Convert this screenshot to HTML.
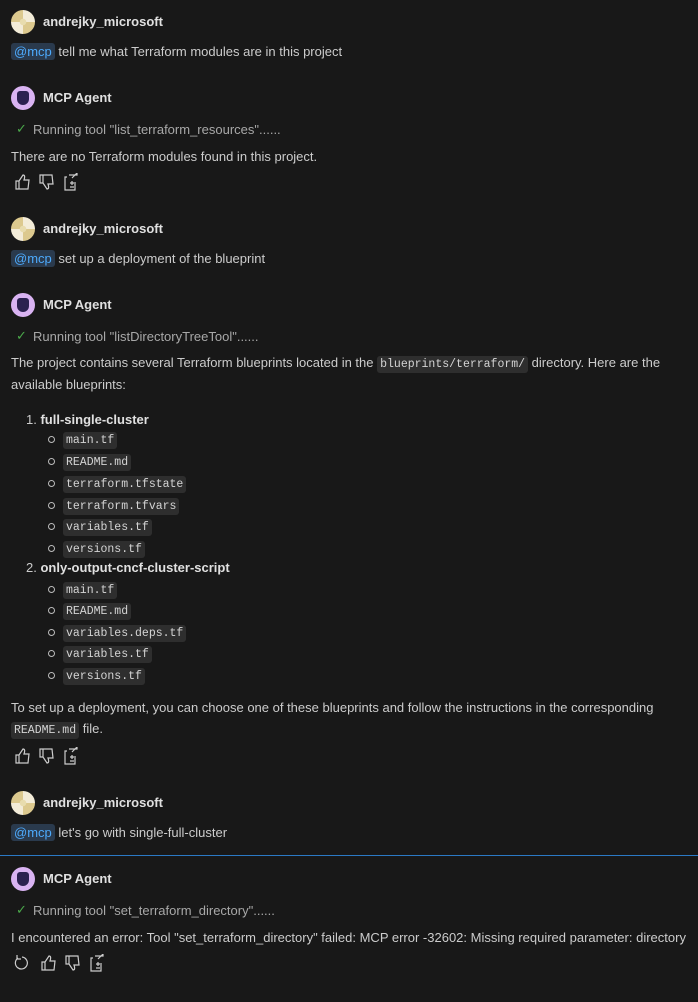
<!DOCTYPE html><html><head><style>
body{margin:0;width:698px;height:1002px;background:#181818;color:#cccccc;font-family:"Liberation Sans",sans-serif;font-size:13px;position:relative;overflow:hidden}
.a{position:absolute;line-height:18px;white-space:nowrap}
.n{font-weight:bold;color:#e0e0e0}
.av{position:absolute;left:11px;width:24px;height:24px;border-radius:50%}
.u{background:radial-gradient(circle,#e8dcae 0 3px,transparent 3.5px),conic-gradient(#f3ecd8 0 25%,#dcc98e 0 50%,#f3ecd8 0 75%,#dcc98e 0)}
.m{background:#d9b3f2}
.m:after{content:"";position:absolute;left:6px;top:5px;width:12px;height:14px;background:#2b2150;border-radius:3px 3px 6px 6px}
.at{background:#2a3a4d;color:#4daafc;padding:1px 3px;border-radius:3px}
.r{color:#a8a8a8;left:33px}
.ck{position:absolute;left:16px;color:#4aa84a;font-size:13px}
code{font-family:"Liberation Mono",monospace;font-size:11.5px;background:#2e2e2e;border-radius:3px;padding:2px 3px;color:#d4d4d4}
.b{position:absolute;left:48px;width:5px;height:5px;border:1px solid #bbb;border-radius:50%}
.ic{position:absolute}
</style></head><body>
<div class="av u" style="top:10px"></div><div class="a n" style="left:43px;top:13px">andrejky_microsoft</div>
<div class="a" style="left:11px;top:43px"><span class="at">@mcp</span> tell me what Terraform modules are in this project</div>
<div class="av m" style="top:86px"></div><div class="a n" style="left:43px;top:89px">MCP Agent</div>
<div class="ck" style="top:121px">✓</div><div class="a r" style="top:121px">Running tool "list_terraform_resources"......</div>
<div class="a" style="left:11px;top:148px">There are no Terraform modules found in this project.</div>
<svg class="ic" style="left:14px;top:173px" width="72" height="18" fill="none" stroke="#ccc" stroke-width="1.2"><path d="M2 8h3v8H2zM5 8l4-6c2 0 2 2 1 5h5l-1 9H5"/><path d="M26 10h3V2h-3zM29 10l4 6c2 0 2-2 1-5h5l-1-9h-9"/><path d="M53 4h-2v13h10V9M55 2h8v-2M63 0l-5 5M56 10h4M58 8v4M56 14h4"/></svg>
<div class="av u" style="top:217px"></div><div class="a n" style="left:43px;top:220px">andrejky_microsoft</div>
<div class="a" style="left:11px;top:250px"><span class="at">@mcp</span> set up a deployment of the blueprint</div>
<div class="av m" style="top:293px"></div><div class="a n" style="left:43px;top:296px">MCP Agent</div>
<div class="ck" style="top:328px">✓</div><div class="a r" style="top:328px">Running tool "listDirectoryTreeTool"......</div>
<div class="a" style="left:11px;top:354px">The project contains several Terraform blueprints located in the <code>blueprints/terraform/</code> directory. Here are the</div>
<div class="a" style="left:11px;top:376px">available blueprints:</div>
<div class="a" style="left:26px;top:411px">1. <b style="color:#e0e0e0">full-single-cluster</b></div>
<div class="b" style="top:436px"></div><div class="a" style="left:63px;top:430px"><code>main.tf</code></div>
<div class="b" style="top:458px"></div><div class="a" style="left:63px;top:452px"><code>README.md</code></div>
<div class="b" style="top:480px"></div><div class="a" style="left:63px;top:474px"><code>terraform.tfstate</code></div>
<div class="b" style="top:502px"></div><div class="a" style="left:63px;top:496px"><code>terraform.tfvars</code></div>
<div class="b" style="top:523px"></div><div class="a" style="left:63px;top:517px"><code>variables.tf</code></div>
<div class="b" style="top:545px"></div><div class="a" style="left:63px;top:539px"><code>versions.tf</code></div>
<div class="a" style="left:26px;top:559px">2. <b style="color:#e0e0e0">only-output-cncf-cluster-script</b></div>
<div class="b" style="top:586px"></div><div class="a" style="left:63px;top:580px"><code>main.tf</code></div>
<div class="b" style="top:607px"></div><div class="a" style="left:63px;top:601px"><code>README.md</code></div>
<div class="b" style="top:629px"></div><div class="a" style="left:63px;top:623px"><code>variables.deps.tf</code></div>
<div class="b" style="top:650px"></div><div class="a" style="left:63px;top:644px"><code>variables.tf</code></div>
<div class="b" style="top:672px"></div><div class="a" style="left:63px;top:666px"><code>versions.tf</code></div>
<div class="a" style="left:11px;top:699px">To set up a deployment, you can choose one of these blueprints and follow the instructions in the corresponding</div>
<div class="a" style="left:11px;top:720px"><code>README.md</code> file.</div>
<svg class="ic" style="left:14px;top:747px" width="72" height="18" fill="none" stroke="#ccc" stroke-width="1.2"><path d="M2 8h3v8H2zM5 8l4-6c2 0 2 2 1 5h5l-1 9H5"/><path d="M26 10h3V2h-3zM29 10l4 6c2 0 2-2 1-5h5l-1-9h-9"/><path d="M53 4h-2v13h10V9M55 2h8v-2M63 0l-5 5M56 10h4M58 8v4M56 14h4"/></svg>
<div class="av u" style="top:791px"></div><div class="a n" style="left:43px;top:794px">andrejky_microsoft</div>
<div class="a" style="left:11px;top:824px"><span class="at">@mcp</span> let's go with single-full-cluster</div>
<div style="position:absolute;left:0;top:855px;width:698px;height:1px;background:#2b79c5"></div>
<div class="av m" style="top:867px"></div><div class="a n" style="left:43px;top:870px">MCP Agent</div>
<div class="ck" style="top:902px">✓</div><div class="a r" style="top:902px">Running tool "set_terraform_directory"......</div>
<div class="a" style="left:11px;top:929px">I encountered an error: Tool "set_terraform_directory" failed: MCP error -32602: Missing required parameter: directory</div>
<svg class="ic" style="left:14px;top:954px" width="100" height="18" fill="none" stroke="#ccc" stroke-width="1.2"><path d="M4 4a6 6 0 1 0 4-1M3 1v4h4"/><path d="M28 8h3v8h-3zM31 8l4-6c2 0 2 2 1 5h5l-1 9h-9"/><path d="M52 10h3V2h-3zM55 10l4 6c2 0 2-2 1-5h5l-1-9h-9"/><path d="M79 4h-2v13h10V9M81 2h8v-2M89 0l-5 5M82 10h4M84 8v4M82 14h4"/></svg>
</body></html>
